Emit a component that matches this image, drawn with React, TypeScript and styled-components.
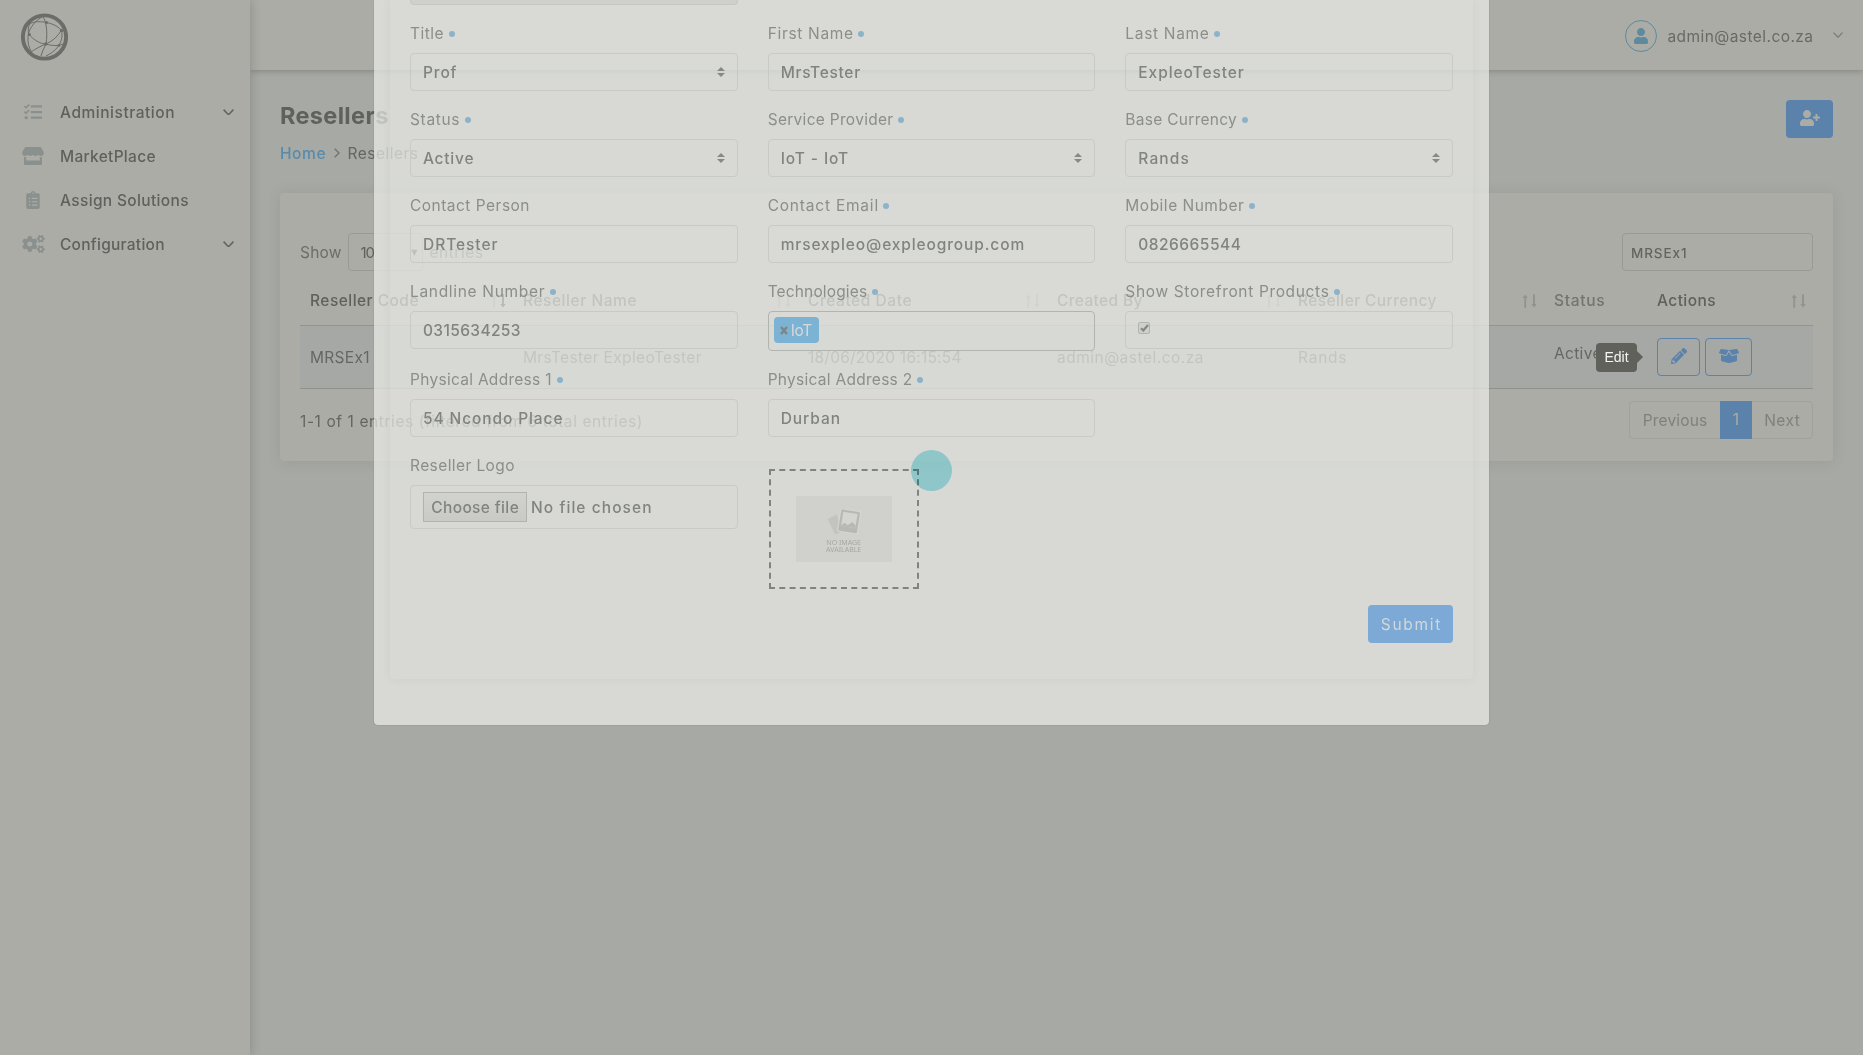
import React, { useLayoutEffect, useRef, useState } from "react";
import styled, { createGlobalStyle, css } from "styled-components";
import {
  FaTasks,
  FaStore,
  FaClipboardList,
  FaCogs,
  FaUser,
  FaUserPlus,
  FaPencilAlt,
  FaBoxOpen,
} from "react-icons/fa";

const Global = createGlobalStyle`
  * { box-sizing: border-box; }
  body {
    margin: 0;
    background: #a7a9a4;
    font-family: Inter, "Liberation Sans", sans-serif;
    font-size: 15.5px;
    line-height: 24px;
    color: #666762;
    overflow: hidden;
  }
`;

/* Text tracked out (or in) so that it fills a given width. */
const Tracked = styled.span`
  display: inline-block;
  white-space: pre;
  flex: none;
  padding-top: 1px;
`;

function Fit({ w, children }: { w: number; children: string }) {
  const ref = useRef<HTMLSpanElement>(null);
  const [ls, setLs] = useState(0);
  useLayoutEffect(() => {
    const el = ref.current;
    if (!el) return;
    const natural = el.getBoundingClientRect().width;
    setLs((w + 0.5 - natural) / Math.max(1, children.length - 1));
  }, []);
  return (
    <Tracked ref={ref} style={{ letterSpacing: ls, marginRight: -ls }}>
      {children}
    </Tracked>
  );
}

const Page = styled.div`
  position: relative;
  display: flex;
  width: 1863px;
  height: 1055px;
  overflow: hidden;
`;

/* ---------- sidebar ---------- */

const Sidebar = styled.aside`
  position: relative;
  z-index: 2;
  width: 250px;
  flex: none;
  background: #abaca5;
  box-shadow: 0 0 10px rgba(60, 62, 58, 0.3);
`;

const LogoBox = styled.div`
  padding: 13px 0 0 21px;
  height: 90px;
  svg {
    display: block;
  }
`;

const Nav = styled.nav`
  display: flex;
  flex-direction: column;
`;

const NavItem = styled.a`
  display: flex;
  align-items: center;
  height: 44px;
  padding: 0 16px 0 19px;
  font-weight: 500;
  color: #60615c;
`;

const NavIcon = styled.span<{ $w: number }>`
  display: flex;
  justify-content: center;
  width: 28px;
  margin-right: 13px;
  color: #8a908d;
  svg {
    width: ${(p) => p.$w}px;
    height: 18px;
  }
`;

const Spacer = styled.span`
  flex: 1;
`;

/* ---------- main ---------- */

const Main = styled.main`
  flex: 1;
  display: flex;
  flex-direction: column;
`;

const TopBar = styled.header`
  display: flex;
  align-items: center;
  justify-content: flex-end;
  height: 70px;
  padding: 2px 20px 0 0;
  background: #abaca5;
  box-shadow: 0 1px 6px rgba(60, 62, 58, 0.34);
  color: #696a65;
`;

const Avatar = styled.span`
  display: flex;
  align-items: center;
  justify-content: center;
  width: 32px;
  height: 32px;
  margin-right: 10px;
  border: 1px solid #5e8a9f;
  border-radius: 50%;
  color: #5e8a9f;
  svg {
    width: 14px;
    height: 16px;
  }
`;

const UserChevron = styled.span`
  display: flex;
  margin: -3px 0 0 20px;
`;

const Content = styled.section`
  padding: 30px 30px 0;
`;

const TitleRow = styled.div`
  display: flex;
  justify-content: space-between;
  height: 93px;
`;

const Heading = styled.h1`
  margin: 0 0 9px;
  font-size: 23.5px;
  line-height: 29px;
  font-weight: 700;
  color: #60615c;
`;

const Crumbs = styled.div`
  display: flex;
  align-items: center;
  height: 28px;
  color: #656661;
`;

const CrumbLink = styled.a`
  font-weight: 500;
  color: #568bad;
`;

const CrumbSep = styled.span`
  display: flex;
  width: 22px;
  justify-content: center;
`;

const AddButton = styled.button`
  display: flex;
  align-items: center;
  justify-content: center;
  width: 47px;
  height: 38px;
  padding: 0 0 2px;
  border: 0;
  border-radius: 4px;
  background: #5b82ab;
  color: #abaca5;
  svg {
    width: 20px;
    height: 16px;
  }
`;

const Card = styled.div`
  height: 268px;
  padding: 40px 20px 0;
  border-radius: 4px;
  background: #abaca5;
  box-shadow: 0 1px 14px rgba(70, 72, 68, 0.13);
`;

const Tools = styled.div`
  display: flex;
  align-items: center;
  justify-content: space-between;
  height: 38px;
`;

const LengthPicker = styled.div`
  display: flex;
  align-items: center;
  color: #6c6d68;
`;

const LengthSelect = styled.span`
  display: flex;
  align-items: center;
  justify-content: space-between;
  width: 75px;
  height: 38px;
  margin: 0 7px 0 6px;
  padding: 0 4px 0 12px;
  border: 1px solid #999a95;
  border-radius: 4px;
  font-size: 15px;
  color: #5f605b;
  i {
    font: 8px "DejaVu Sans", sans-serif;
    color: #555;
  }
`;

const Search = styled.div`
  display: flex;
  align-items: center;
  width: 191px;
  height: 38px;
  padding: 0 8px;
  border: 1px solid #999a95;
  border-radius: 4px;
  font-size: 13.5px;
  font-weight: 500;
  color: #63645f;
`;

const columns = "213px 285px 249px 241px 256px 103px 166px";

const HeadRow = styled.div`
  display: grid;
  grid-template-columns: ${columns};
  height: 55px;
  border-bottom: 1px solid #92948f;
`;

const HeadCell = styled.div<{ $faint?: boolean }>`
  display: flex;
  align-items: center;
  justify-content: space-between;
  padding: 5px 7px 0 10px;
  font-weight: 500;
  color: ${(p) => (p.$faint ? "#73746f" : "#60615c")};
`;

const BodyRow = styled.div`
  display: grid;
  grid-template-columns: ${columns};
  height: 63px;
  background: #a5a8a5;
  border-bottom: 1px solid #8f918c;
`;

const Cell = styled.div<{ $lift?: number }>`
  display: flex;
  align-items: center;
  padding: 0 10px ${(p) => p.$lift || 0}px;
  color: #666762;
`;

const Actions = styled(Cell)`
  position: relative;
  gap: 5px;
`;

const IconButton = styled.button<{ $w: number; $icon: number }>`
  display: flex;
  align-items: center;
  justify-content: center;
  width: ${(p) => p.$w}px;
  height: 38px;
  padding: 0 0 2px;
  border: 1px solid #5b82ab;
  border-radius: 4px;
  background: transparent;
  color: #5b82ab;
  svg {
    width: ${(p) => p.$icon}px;
    height: 16px;
  }
`;

const Foot = styled.div`
  display: flex;
  justify-content: space-between;
  padding-top: 12px;
  color: #656661;
`;

const FootInfo = styled.div`
  padding-top: 8px;
`;

const Pager = styled.div`
  display: flex;
  width: 184px;
  height: 38px;
  border: 1px solid #a0a19c;
  border-radius: 4px;
  color: #80817c;
`;

const PagerItem = styled.span<{ $active?: boolean; $w: number }>`
  display: flex;
  align-items: center;
  justify-content: center;
  width: ${(p) => p.$w}px;
  flex: none;
  ${(p) =>
    p.$active &&
    css`
      margin: -1px 0;
      background: #5b82ab;
      color: #abaca5;
    `}
`;

/* ---------- tooltip and click marker ---------- */

const Tooltip = styled.div`
  position: absolute;
  z-index: 6;
  left: 1596px;
  top: 343px;
  width: 41px;
  height: 29px;
  border-radius: 4px;
  background: #61615c;
  color: #f4f4f2;
  font: 14px/28px "Liberation Sans", Arial, sans-serif;
  text-align: center;
  &::after {
    content: "";
    position: absolute;
    left: 41px;
    top: 8px;
    border: 6px solid transparent;
    border-right: 0;
    border-left-color: #61615c;
  }
`;

const ClickMark = styled.div`
  position: absolute;
  z-index: 7;
  left: 911px;
  top: 450px;
  width: 41px;
  height: 41px;
  border-radius: 50%;
  background: #a8e9f1;
  mix-blend-mode: multiply;
`;

/* ---------- modal ---------- */

const Modal = styled.div`
  position: absolute;
  z-index: 5;
  left: 374px;
  top: 0;
  width: 1115px;
  height: 725px;
  padding: 0 16px;
  border-radius: 0 0 4px 4px;
  background: rgba(237, 238, 233, 0.7);
  box-shadow: 0 0 1px rgba(70, 72, 68, 0.7);
`;

const ModalCard = styled.div`
  height: 679px;
  padding: 0 20px;
  border-radius: 0 0 4px 4px;
  box-shadow: 0 0 10px rgba(90, 92, 88, 0.07);
`;

const FormGrid = styled.div`
  display: grid;
  grid-template-columns: repeat(3, 1fr);
  column-gap: 30px;
  row-gap: 16px;
  align-items: start;
`;

const CodeField = styled.div`
  height: 5px;
  border: 1px solid #c6c7c2;
  border-top: 0;
  border-radius: 0 0 4px 4px;
  background: #cfd0cb;
  grid-column: 1;
`;

const Field = styled.div`
  display: flex;
  flex-direction: column;
  gap: 8px;
`;

const Label = styled.label`
  display: flex;
  align-items: center;
  height: 24px;
  color: #8b8e89;
`;

const Dot = styled.i`
  width: 6px;
  height: 6px;
  margin: 2px 0 0 5px;
  border-radius: 50%;
  background: #8cb3ca;
`;

const Input = styled.div<{ $h?: number; $focus?: boolean }>`
  display: flex;
  align-items: center;
  height: ${(p) => p.$h || 38}px;
  padding: 0 12px;
  border: 1px solid ${(p) => (p.$focus ? "#b2b4b0" : "#c8cac7")};
  border-radius: 4px;
  font-weight: 500;
  color: #808480;
`;

const Caret = styled.svg`
  display: block;
  margin-left: auto;
`;

const Tag = styled.span`
  display: flex;
  align-items: center;
  gap: 3px;
  width: 45px;
  height: 26px;
  margin: -2px 0 0 -7px;
  padding-left: 6px;
  border-radius: 4px;
  background: #7cb3d5;
  color: #d5dadb;
  font-weight: 400;
`;

const CheckBox = styled.span`
  display: flex;
  align-items: center;
  justify-content: center;
  width: 12px;
  height: 12px;
  margin-top: -4px;
  border: 1px solid #b3b4b0;
  border-radius: 2px;
  background: #cfd0cb;
`;

const FileButton = styled.span`
  display: flex;
  align-items: center;
  justify-content: center;
  width: 104px;
  height: 30px;
  margin-right: 4px;
  border: 1px solid #b2b3af;
  background: linear-gradient(#d2d3ce, #c9cac5);
`;

const ImageDrop = styled.div`
  display: flex;
  align-items: center;
  justify-content: center;
  width: 150px;
  height: 120px;
  margin: 16px 0 0 1px;
  border: 2px dashed #7f8480;
`;

const NoImage = styled.div`
  display: flex;
  flex-direction: column;
  align-items: center;
  width: 96px;
  height: 66px;
  padding-top: 13px;
  background: #d0d1cd;
  color: #a6a7a3;
  font: 7px/7.3px "Noto Sans", sans-serif;
  text-align: center;
  svg {
    display: block;
    margin-bottom: 4px;
  }
`;

const SubmitRow = styled.div`
  display: flex;
  justify-content: flex-end;
  margin-top: 16px;
`;

const Submit = styled.button`
  display: flex;
  align-items: center;
  justify-content: center;
  width: 85px;
  height: 38px;
  padding: 0;
  border: 0;
  border-radius: 4px;
  background: #7ca9d5;
  color: #d2d8da;
  font: 400 15.5px/24px Inter, sans-serif;
`;

/* ---------- drawings ---------- */

const Globe = () => (
  <svg width="47" height="48" viewBox="0 0 47 48" fill="none" stroke="#6c6d68">
    <circle cx="23.5" cy="24" r="21.6" strokeWidth="3.9" />
    <g strokeWidth="1">
      <path d="M9 10.5C15 8 20 8.500 25.500 9.500C33 11 38 14 42 19" />
      <path d="M22 4C25 8 27 18 25 31" />
      <path d="M21 4C12 9 7 18 7 24C6.500 29 8 35 10 38" />
      <path d="M7.500 21C13 27 19 31 25 31C31 33 37 33 42 31" />
      <path d="M40.500 17C37 23 32 28 25 31C20 33 14 36 10 39" />
      <path d="M25 31C23 35 21 39 20 43" />
      <path d="M40.500 17C42 24 40 29 37.500 33C34 38 29 41 25 43" />
      <path d="M9 10.500C7 14 7 18 7.500 21" />
    </g>
    <g fill="#6c6d68" stroke="none">
      <circle cx="25.500" cy="9.600" r="1.500" />
      <circle cx="8.400" cy="21.500" r="1.500" />
      <circle cx="24.700" cy="31" r="1.700" />
      <circle cx="40.400" cy="17.300" r="1.500" />
      <circle cx="38" cy="32.500" r="1.300" />
    </g>
  </svg>
);

const Chevron = ({ w = 10, c = "#656661", s = 1.4 }) => (
  <svg width={w} height={w * 0.6} viewBox="0 0 10 6" fill="none" stroke={c} strokeWidth={s}>
    <path d="M0.500 0.600L5 5.200L9.500 0.600" />
  </svg>
);

const SortMark = ({ down = false }) => (
  <svg width="15" height="14" viewBox="0 0 15 14" fill="none" strokeWidth="1.900">
    <g stroke="#92938e" fill="#92938e">
      <path d="M3.200 13.700V2" />
      <path d="M0.500 4L3.200 0.500L5.900 4Z" stroke="none" />
    </g>
    <g stroke={down ? "#41423e" : "#92938e"} fill={down ? "#41423e" : "#92938e"}>
      <path d="M12 0.300V12" />
      <path d="M9.300 10L12 13.500L14.700 10Z" stroke="none" />
    </g>
  </svg>
);

const SelectCaret = () => (
  <Caret width="8" height="10" viewBox="0 0 8 10" fill="#868984">
    <path d="M0 4L4 0L8 4ZM0 6L4 10L8 6Z" />
  </Caret>
);

const Photos = () => (
  <svg width="34" height="26" viewBox="0 0 34 26">
    <path d="M0.500 10L10 5.500L14 23L8 25.500Z" fill="#c3c4bf" />
    <g transform="rotate(9 22 13)">
      <rect x="11.500" y="0.500" width="21" height="23.500" rx="1.500" fill="#d6d7d3" />
      <rect x="12.500" y="1.500" width="19" height="21.500" rx="1.500" fill="#b8b9b5" />
      <rect x="14.800" y="3.800" width="14.400" height="14.500" fill="#d4d5d1" />
      <path d="M14.800 17.500L18 14.500L21 16.500L25.500 12.500L29.200 15.500V18.300H14.800Z" fill="#b8b9b5" />
    </g>
  </svg>
);

const nav = [
  { text: "Administration", w: 114, icon: <FaTasks />, iw: 18, open: true },
  { text: "MarketPlace", w: 95, icon: <FaStore />, iw: 22 },
  { text: "Assign Solutions", w: 128, icon: <FaClipboardList />, iw: 14 },
  { text: "Configuration", w: 104, icon: <FaCogs />, iw: 23, open: true },
];

type FieldSpec = {
  label: string;
  lw: number;
  req?: boolean;
  value?: string;
  vw?: number;
  select?: boolean;
};

const fields: FieldSpec[] = [
  { label: "Title", lw: 33, req: true, value: "Prof", vw: 33, select: true },
  { label: "First Name", lw: 85, req: true, value: "MrsTester", vw: 79 },
  { label: "Last Name", lw: 83, req: true, value: "ExpleoTester", vw: 105 },
  { label: "Status", lw: 49, req: true, value: "Active", vw: 50, select: true },
  { label: "Service Provider", lw: 125, req: true, value: "IoT - IoT", vw: 67, select: true },
  { label: "Base Currency", lw: 111, req: true, value: "Rands", vw: 50, select: true },
  { label: "Contact Person", lw: 119, value: "DRTester", vw: 74 },
  { label: "Contact Email", lw: 110, req: true, value: "mrsexpleo@expleogroup.com", vw: 243 },
  { label: "Mobile Number", lw: 118, req: true, value: "0826665544", vw: 102 },
];

const FieldLabel = ({ label, lw, req }: FieldSpec) => (
  <Label>
    <Fit w={lw}>{label}</Fit>
    {req && <Dot />}
  </Label>
);

const FormField = (f: FieldSpec) => (
  <Field>
    <FieldLabel {...f} />
    <Input>
      <Fit w={f.vw || 0}>{f.value || ""}</Fit>
      {f.select && <SelectCaret />}
    </Input>
  </Field>
);

const heads = [
  { t: "Reseller Code", w: 108, sort: true, down: true },
  { t: "Reseller Name", w: 113, sort: true },
  { t: "Created Date", w: 103, sort: true },
  { t: "Created By", w: 85, sort: true },
  { t: "Reseller Currency", w: 138, sort: true },
  { t: "Status", w: 50, faint: true },
  { t: "Actions", w: 58, sort: true },
];

export default function App() {
  return (
    <Page>
      <Global />
      <Sidebar>
        <LogoBox>
          <Globe />
        </LogoBox>
        <Nav>
          {nav.map((n) => (
            <NavItem key={n.text}>
              <NavIcon $w={n.iw}>{n.icon}</NavIcon>
              <Fit w={n.w}>{n.text}</Fit>
              <Spacer />
              {n.open && <Chevron w={11} s={1.5} />}
            </NavItem>
          ))}
        </Nav>
      </Sidebar>
      <Main>
        <TopBar>
          <Avatar>
            <FaUser />
          </Avatar>
          <Fit w={145}>admin@astel.co.za</Fit>
          <UserChevron>
            <Chevron c="#7a7b76" s={1.3} />
          </UserChevron>
        </TopBar>
        <Content>
          <TitleRow>
            <div>
              <Heading>
                <Fit w={108}>Resellers</Fit>
              </Heading>
              <Crumbs>
                <CrumbLink>
                  <Fit w={45}>Home</Fit>
                </CrumbLink>
                <CrumbSep>
                  <svg width="6" height="10" viewBox="0 0 6 10" fill="none" stroke="#73746f" strokeWidth="1.400">
                    <path d="M0.700 0.800L5 5L0.700 9.200" />
                  </svg>
                </CrumbSep>
                <Fit w={70}>Resellers</Fit>
              </Crumbs>
            </div>
            <AddButton>
              <FaUserPlus />
            </AddButton>
          </TitleRow>
          <Card>
            <Tools>
              <LengthPicker>
                <Fit w={41}>Show</Fit>
                <LengthSelect>
                  <Fit w={14}>10</Fit>
                  <i>▼</i>
                </LengthSelect>
                <Fit w={53}>entries</Fit>
              </LengthPicker>
              <Search>
                <Fit w={55}>MRSEx1</Fit>
              </Search>
            </Tools>
            <HeadRow>
              {heads.map((h) => (
                <HeadCell key={h.t} $faint={h.faint}>
                  <Fit w={h.w}>{h.t}</Fit>
                  {h.sort && <SortMark down={h.down} />}
                </HeadCell>
              ))}
            </HeadRow>
            <BodyRow>
              <Cell>
                <Fit w={59}>MRSEx1</Fit>
              </Cell>
              <Cell>
                <Fit w={178}>MrsTester ExpleoTester</Fit>
              </Cell>
              <Cell>
                <Fit w={153}>18/06/2020 16:15:54</Fit>
              </Cell>
              <Cell>
                <Fit w={146}>admin@astel.co.za</Fit>
              </Cell>
              <Cell>
                <Fit w={48}>Rands</Fit>
              </Cell>
              <Cell $lift={8}>
                <Fit w={47}>Active</Fit>
              </Cell>
              <Actions>
                <IconButton $w={43} $icon={16}>
                  <FaPencilAlt />
                </IconButton>
                <IconButton $w={47} $icon={20}>
                  <FaBoxOpen />
                </IconButton>
              </Actions>
            </BodyRow>
            <Foot>
              <FootInfo>
                <Fit w={342}>1-1 of 1 entries (filtered from 6 total entries)</Fit>
              </FootInfo>
              <Pager>
                <PagerItem $w={90}>
                  <Fit w={64}>Previous</Fit>
                </PagerItem>
                <PagerItem $w={32} $active>
                  1
                </PagerItem>
                <PagerItem $w={60}>
                  <Fit w={35}>Next</Fit>
                </PagerItem>
              </Pager>
            </Foot>
          </Card>
        </Content>
      </Main>

      <Modal>
        <ModalCard>
          <FormGrid>
            <CodeField />
            <span />
            <span />
            {fields.map((f) => (
              <FormField key={f.label} {...f} />
            ))}
            <FormField label="Landline Number" lw={134} req value="0315634253" vw={97} />
            <Field>
              <FieldLabel label="Technologies" lw={99} req />
              <Input $h={40} $focus>
                <Tag>
                  <svg width="8" height="9" viewBox="0 0 8 9" stroke="#7e8480" strokeWidth="2.400">
                    <path d="M1 1L7 8M7 1L1 8" />
                  </svg>
                  <Fit w={21}>IoT</Fit>
                </Tag>
              </Input>
            </Field>
            <Field>
              <FieldLabel label="Show Storefront Products" lw={203} req />
              <Input>
                <CheckBox>
                  <svg width="9" height="8" viewBox="0 0 9 8" fill="none" stroke="#858884" strokeWidth="2.200">
                    <path d="M1 4.200L3.300 6.500L8 1" />
                  </svg>
                </CheckBox>
              </Input>
            </Field>
            <FormField label="Physical Address 1" lw={141} req value="54 Ncondo Place" vw={139} />
            <FormField label="Physical Address 2" lw={144} req value="Durban" vw={59} />
            <span />
            <Field>
              <FieldLabel label="Reseller Logo" lw={104} />
              <Input $h={44}>
                <FileButton>
                  <Fit w={87}>Choose file</Fit>
                </FileButton>
                <Fit w={120}>No file chosen</Fit>
              </Input>
            </Field>
            <ImageDrop>
              <NoImage>
                <Photos />
                <span>NO IMAGE</span>
                <span>AVAILABLE</span>
              </NoImage>
            </ImageDrop>
          </FormGrid>
          <SubmitRow>
            <Submit>
              <Fit w={59}>Submit</Fit>
            </Submit>
          </SubmitRow>
        </ModalCard>
      </Modal>

      <Tooltip>Edit</Tooltip>
      <ClickMark />
    </Page>
  );
}
